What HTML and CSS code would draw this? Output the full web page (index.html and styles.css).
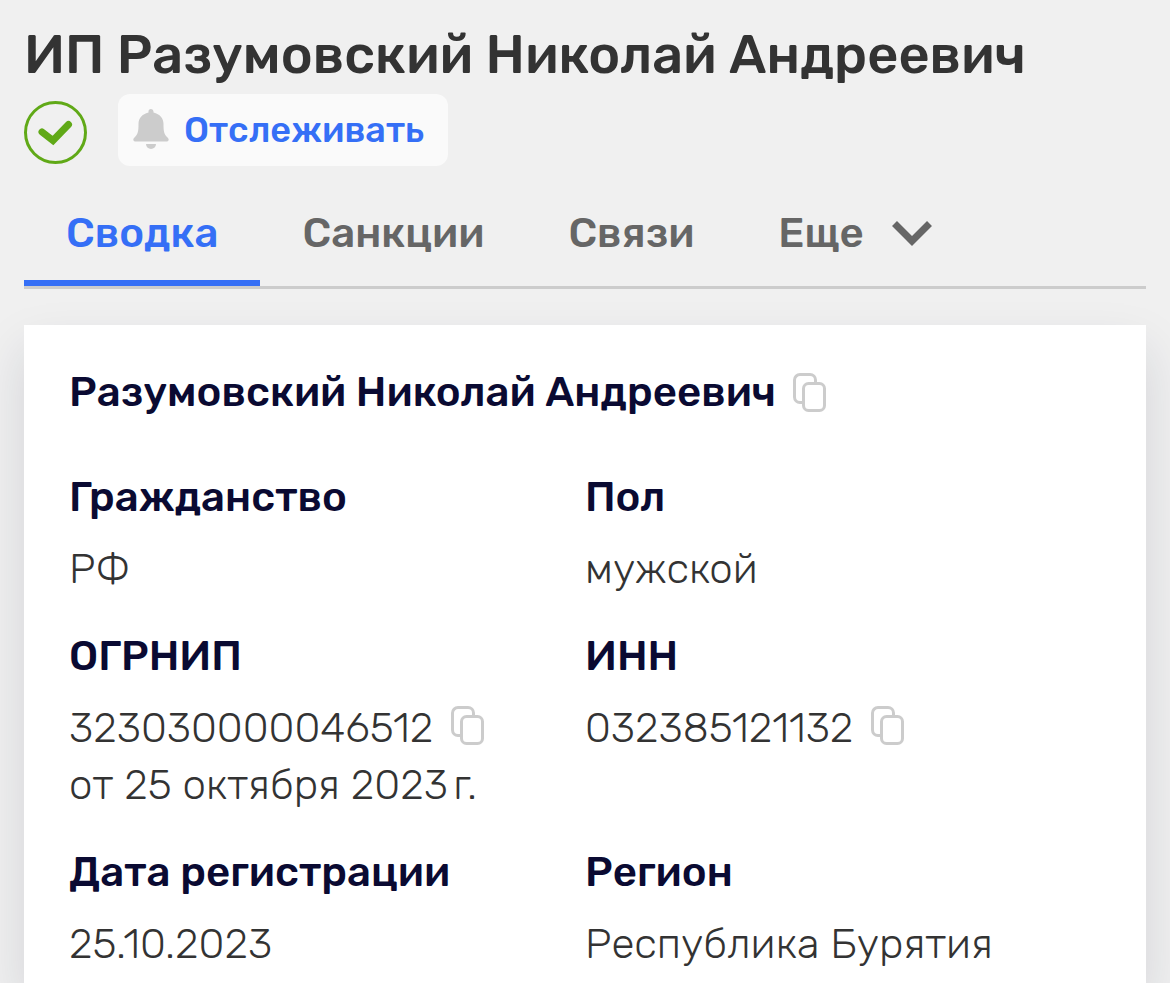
FILE: index.html
```html
<!DOCTYPE html>
<html lang="ru">
<head>
    <meta charset="UTF-8">
    <meta name="viewport" content="width=device-width, initial-scale=1.0">
    <title>ИП Разумовский Николай Андреевич</title>
    <link rel="stylesheet" href="styles.css">
</head>
<body>
    <header class="header">
        <h1 class="title">ИП Разумовский Николай Андреевич</h1>
        <div class="actions">
            <svg class="status" viewBox="0 0 63 63" role="img" aria-label="Действующий">
                <circle cx="31.500" cy="31.500" r="30"/>
                <path d="M18 31 L29 39.500 L44.500 23.500"/>
            </svg>
            <button class="follow" type="button">
                <svg class="bell" viewBox="0 0 36 42" aria-hidden="true">
                    <path d="M15.500 4.500V3.500a2.500 2.500 0 0 1 5 0v1C27 6 30.500 10.500 30.500 16c0 7 .5 10.500 4 13.500 2.500 2.500 .5 4-1 4h-31c-1.500 0-3.500-1.500-1-4 3.500-3 4-6.500 4-13.500 0-5.500 3.500-10 10-11.500z"/>
                    <path d="M13 36h10a5 5 0 0 1-10 0z"/>
                </svg>
                Отслеживать
            </button>
        </div>
    </header>

    <nav class="tabs">
        <a class="tab active" href="#summary">Сводка</a>
        <a class="tab" href="#sanctions">Санкции</a>
        <a class="tab" href="#links">Связи</a>
        <button class="tab" type="button">
            Еще
            <svg class="chevron" viewBox="0 0 40 26" aria-hidden="true"><path d="M2.500 3.500L20 21L37.500 3.500"/></svg>
        </button>
    </nav>

    <main class="card" id="summary">
        <h2 class="name">
            Разумовский Николай Андреевич
            <button class="copy" type="button" aria-label="Скопировать имя">
                <svg viewBox="0 0 34 40" aria-hidden="true">
                    <path d="M9.500 29.500H7a5.500 5.500 0 0 1-5.500-5.500V7A5.500 5.500 0 0 1 7 1.500h10A5.500 5.500 0 0 1 22.500 7v3"/>
                    <rect x="10.500" y="10.500" width="21" height="27" rx="5"/>
                </svg>
            </button>
        </h2>
        <dl class="details">
            <div class="item">
                <dt>Гражданство</dt>
                <dd>РФ</dd>
            </div>
            <div class="item">
                <dt>Пол</dt>
                <dd>мужской</dd>
            </div>
            <div class="item">
                <dt>ОГРНИП</dt>
                <dd>
                    323030000046512
                    <button class="copy" type="button" aria-label="Скопировать ОГРНИП">
                        <svg viewBox="0 0 34 40" aria-hidden="true">
                            <path d="M9.500 29.500H7a5.500 5.500 0 0 1-5.500-5.500V7A5.500 5.500 0 0 1 7 1.500h10A5.500 5.500 0 0 1 22.500 7v3"/>
                            <rect x="10.500" y="10.500" width="21" height="27" rx="5"/>
                        </svg>
                    </button>
                    <br>от 25 октября 2023&#8239;г.
                </dd>
            </div>
            <div class="item">
                <dt>ИНН</dt>
                <dd>
                    032385121132
                    <button class="copy" type="button" aria-label="Скопировать ИНН">
                        <svg viewBox="0 0 34 40" aria-hidden="true">
                            <path d="M9.500 29.500H7a5.500 5.500 0 0 1-5.500-5.500V7A5.500 5.500 0 0 1 7 1.500h10A5.500 5.500 0 0 1 22.500 7v3"/>
                            <rect x="10.500" y="10.500" width="21" height="27" rx="5"/>
                        </svg>
                    </button>
                </dd>
            </div>
            <div class="item">
                <dt>Дата регистрации</dt>
                <dd>25.10.2023</dd>
            </div>
            <div class="item">
                <dt>Регион</dt>
                <dd>Республика Бурятия</dd>
            </div>
        </dl>
    </main>
</body>
</html>
```

FILE: styles.css
```css
* {
    box-sizing: border-box;
}
body {
    display: flex;
    flex-direction: column;
    min-height: 100vh;
    margin: 0;
    padding: 23px 24px 0;
    background-color: #f0f0f0;
    color: #333;
    font-family: Rubik, Roboto, sans-serif;
    font-size: 42px;
    line-height: 57px;
}
button {
    border: 0;
    background: none;
    font: inherit;
    cursor: pointer;
}
.title {
    margin: 0;
    font-size: 54px;
    font-weight: 500;
    line-height: 64px;
}
.actions {
    display: flex;
    align-items: center;
    gap: 31px;
    margin-top: 7px;
}
.status {
    width: 63px;
    height: 63px;
    margin-top: 5px;
    fill: none;
    stroke: #60a917;
    stroke-width: 3;
}
.status path {
    stroke-width: 7;
    stroke-linecap: round;
}
.follow {
    display: flex;
    align-items: center;
    gap: 15px;
    height: 72px;
    padding: 0 24px 2px 15px;
    border-radius: 12px;
    background-color: #fafafa;
    color: #356ff6;
    font-size: 36px;
    font-weight: 500;
}
.bell {
    width: 36px;
    height: 42px;
    fill: #ccc;
}
.tabs {
    display: flex;
    margin-top: 34px;
    border-bottom: 3px solid #ccc;
}
.tab {
    display: flex;
    align-items: center;
    gap: 28px;
    height: 86px;
    padding: 0 42px 14px;
    border-bottom: 6px solid transparent;
    color: #666;
    font-weight: 500;
    text-decoration: none;
}
.tab.active {
    border-bottom-color: #356ff6;
    color: #356ff6;
}
.chevron {
    width: 40px;
    height: 26px;
    fill: none;
    stroke: #666;
    stroke-width: 7;
}
.card {
    flex: 1;
    margin-top: 36px;
    padding: 39px 45px 10px;
    background-color: #fff;
    box-shadow: 0 24px 48px rgba(20, 30, 60, 0.13);
}
.name {
    margin: 0 0 48px;
    color: #0a0a32;
    font-size: 42px;
    font-weight: 500;
}
.copy {
    margin-left: 7px;
    padding: 0;
    line-height: 1;
    vertical-align: -4px;
}
.name .copy {
    vertical-align: -7px;
}
.copy svg {
    display: block;
    width: 34px;
    height: 40px;
    fill: none;
    stroke: #ccc;
    stroke-width: 3;
}
.details {
    display: grid;
    grid-template-columns: 1fr 1fr;
    row-gap: 30px;
    margin: 0;
}
.item dt {
    margin-bottom: 15px;
    color: #0a0a32;
    font-weight: 500;
}
.item dd {
    margin: 0;
    font-weight: 300;
}
```
